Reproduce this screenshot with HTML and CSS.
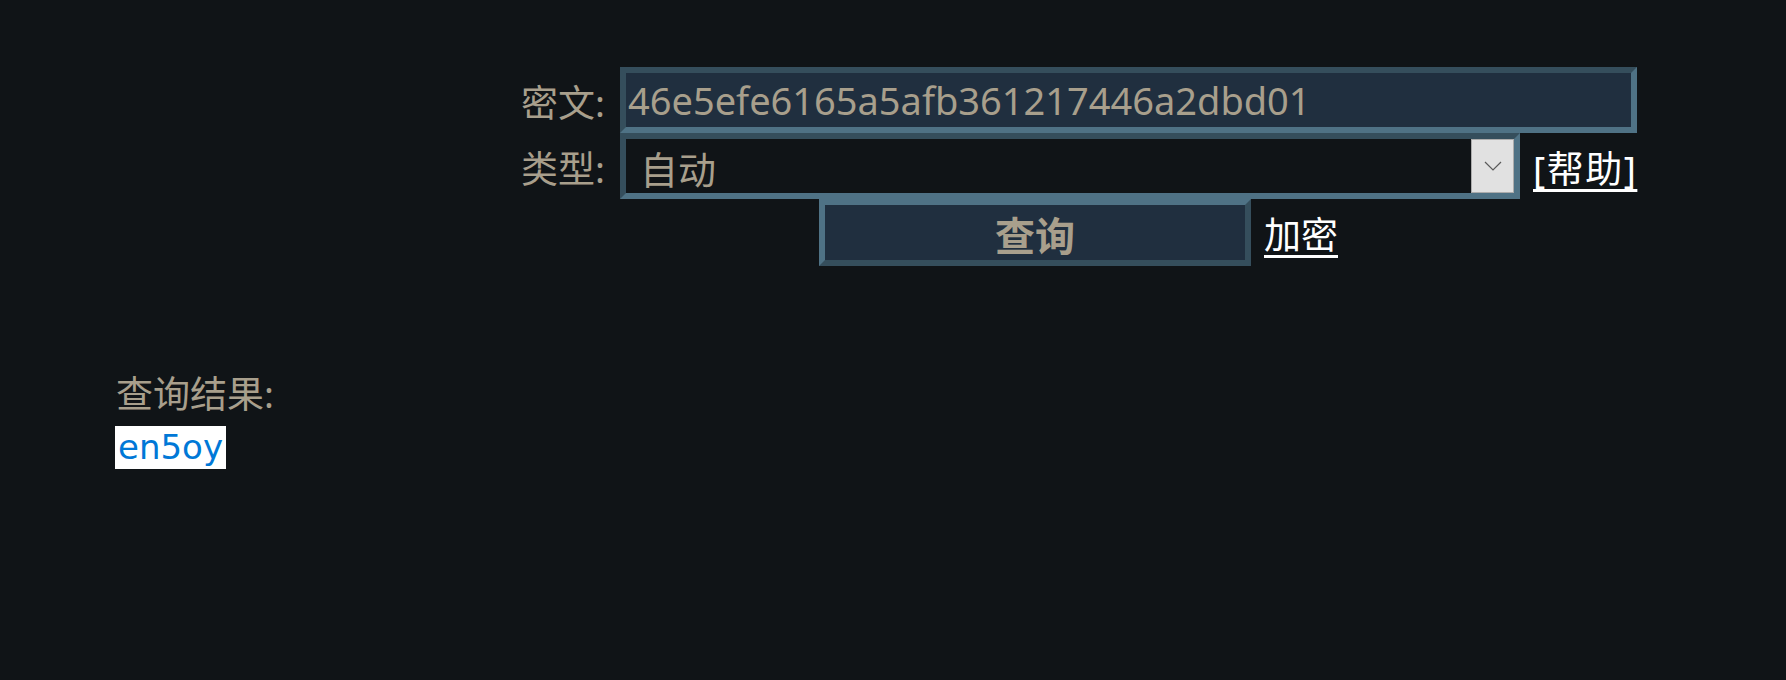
FILE: index.html
```html
<!DOCTYPE html>
<html lang="zh-CN">
<head>
<meta charset="utf-8">
<title>查询</title>
<link rel="stylesheet" href="styles.css">
</head>
<body>
<form class="form">
  <div class="row">
    <label class="label" for="cipher">密文:</label>
    <input class="field" id="cipher" type="text" value="46e5efe6165a5afb361217446a2dbd01">
  </div>
  <div class="row">
    <label class="label">类型:</label>
    <div class="select">
      <span class="select-text">自动</span>
      <span class="arrow"><svg width="18" height="10" viewBox="0 0 18 10"><polyline points="1,1 9,9 17,1" fill="none" stroke="#5a5a5a" stroke-width="1.2"/></svg></span>
    </div>
    <a class="help" href="#">[帮助]</a>
  </div>
  <div class="actions">
    <button class="btn" type="button">查询</button>
    <a class="link" href="#">加密</a>
  </div>
</form>
<div class="result">
  <div class="result-title">查询结果:</div>
  <span class="result-value">en5oy</span>
</div>
</body>
</html>
```
FILE: styles.css
```css
body {
  margin: 0;
  background: #101417;
  font-family: "Noto Sans", "Noto Sans CJK SC", sans-serif;
  font-size: 37px;
  color: #a89f8c;
}

.form {
  margin: 67px 0 0 516px;
  width: 1121px;
}

.row {
  display: flex;
  height: 66px;
}

.label {
  box-sizing: border-box;
  flex-shrink: 0;
  width: 104px;
  height: 66px;
  padding: 6px 15px 0 0;
  line-height: 60px;
  text-align: right;
  white-space: nowrap;
}

.field {
  box-sizing: border-box;
  flex-shrink: 0;
  width: 1017px;
  height: 66px;
  margin: 0;
  padding: 0 0 0 2px;
  border: 6px solid;
  border-color: #354e5c #4f7285 #4f7285 #354e5c;
  background: #202f3f;
  color: #a89f8c;
  font: 38px "Noto Sans", "Noto Sans CJK SC", sans-serif;
  outline: none;
}

.select {
  box-sizing: border-box;
  flex-shrink: 0;
  width: 900px;
  height: 66px;
  border: 6px solid;
  border-color: #354e5c #4f7285 #4f7285 #354e5c;
  background: #101417;
  display: flex;
}

.select-text {
  flex: 1;
  padding: 6px 0 0 14px;
  line-height: 48px;
  font-size: 38px;
}

.arrow {
  box-sizing: border-box;
  width: 43px;
  border: 1px solid #acacac;
  background: #e1e1e1;
  display: flex;
  align-items: center;
  justify-content: center;
}

.help {
  margin-left: 13px;
  padding-top: 6px;
  line-height: 60px;
  color: #fff;
  letter-spacing: 1.5px;
  text-decoration: underline;
  text-underline-offset: 0.16em;
  white-space: nowrap;
}

.actions {
  display: flex;
  justify-content: center;
  align-items: center;
  gap: 13px;
  padding-left: 4px;
}

.btn {
  box-sizing: border-box;
  width: 432px;
  height: 67px;
  margin: 0;
  padding: 0;
  border: 6px solid;
  border-color: #4f7285 #354e5c #354e5c #4f7285;
  background: #202f3f;
  color: #a89f8c;
  font: bold 40px "Noto Sans", "Noto Sans CJK SC", sans-serif;
}

.link {
  color: #fff;
  text-decoration: underline;
  text-underline-offset: 0.16em;
}

.result {
  margin: 104px 0 0 115px;
}

.result-title {
  line-height: 48px;
  padding-left: 1px;
}

.result-value {
  display: inline-block;
  margin-top: 8px;
  height: 43px;
  padding: 0 3px;
  background: #fff;
  color: #0078d7;
  font: 34px "DejaVu Sans", sans-serif;
  line-height: 43px;
}
```
